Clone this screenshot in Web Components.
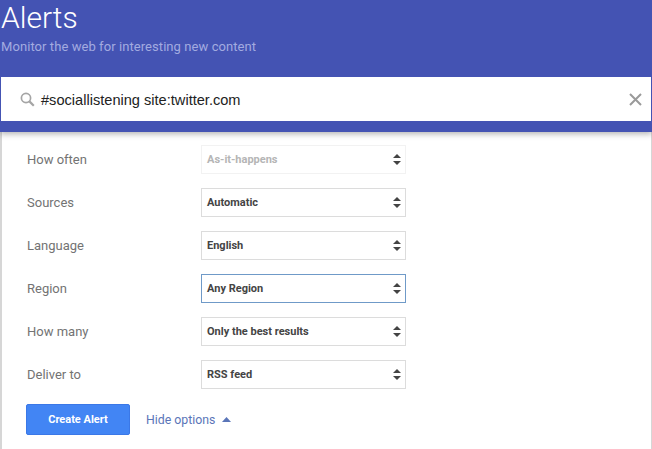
<!doctype html>
<html lang="en">
<head>
<meta charset="utf-8">
<title>Alerts</title>
<style>
  html, body { margin: 0; height: 100%; background: #fff; overflow: hidden; }
  body { font-family: Roboto, "Liberation Sans", sans-serif; }
</style>
</head>
<body>
<alerts-app>
  <alerts-header title="Alerts" subtitle="Monitor the web for interesting new content">
    <alerts-search value="#sociallistening site:twitter.com"></alerts-search>
  </alerts-header>
  <alerts-options>
    <option-row label="How often" value="As-it-happens" disabled></option-row>
    <option-row label="Sources" value="Automatic"></option-row>
    <option-row label="Language" value="English"></option-row>
    <option-row label="Region" value="Any Region" focused></option-row>
    <option-row label="How many" value="Only the best results"></option-row>
    <option-row label="Deliver to" value="RSS feed"></option-row>
    <alerts-actions></alerts-actions>
  </alerts-options>
</alerts-app>

<script>
class AlertsApp extends HTMLElement {
  constructor() {
    super();
    this.attachShadow({ mode: 'open' }).innerHTML = `
      <style>
        :host { display: flex; flex-direction: column; width: 652px; height: 449px; overflow: hidden; }
      </style>
      <slot></slot>`;
  }
}

class AlertsHeader extends HTMLElement {
  connectedCallback() {
    this.attachShadow({ mode: 'open' }).innerHTML = `
      <style>
        :host {
          display: block; height: 132px; box-sizing: border-box;
          background: #4453b3; position: relative; z-index: 1;
          box-shadow: 0 2px 6px rgba(0,0,0,.3);
        }
        h1 { margin: 0; height: 37px; padding-left: 1px; font: 300 30px/35px Roboto, sans-serif; color: #fff; }
        p { margin: 0; height: 40px; padding-left: 1px; font: 400 13px/20px Roboto, sans-serif; letter-spacing: .07px; color: #a3abe0; }
        .bar { padding: 0 1px; }
      </style>
      <h1>${this.getAttribute('title')}</h1>
      <p>${this.getAttribute('subtitle')}</p>
      <div class="bar"><slot></slot></div>`;
  }
}

class AlertsSearch extends HTMLElement {
  connectedCallback() {
    this.attachShadow({ mode: 'open' }).innerHTML = `
      <style>
        :host {
          display: flex; align-items: center; height: 44px; box-sizing: border-box;
          background: #fff; padding: 0 9px 0 19px;
          font: 400 14.6px "Liberation Sans", sans-serif; color: #222;
        }
        span { flex: 1; padding-left: 6px; position: relative; top: 1px; }
        svg { display: block; }
      </style>
      <svg width="15" height="15" viewBox="0 0 15 15" fill="none" stroke="#a5a5a5">
        <circle cx="6" cy="6" r="4.6" stroke-width="1.7"/>
        <path d="M9.4 9.4l4.4 4.4" stroke-width="2.2"/>
      </svg>
      <span>${this.getAttribute('value')}</span>
      <svg width="13" height="13" viewBox="0 0 13 13" fill="none" stroke="#9a9a9a" stroke-width="2">
        <path d="M1 1l11 11M12 1L1 12"/>
      </svg>`;
  }
}

class AlertsOptions extends HTMLElement {
  constructor() {
    super();
    this.attachShadow({ mode: 'open' }).innerHTML = `
      <style>
        :host {
          display: flex; flex-direction: column; flex: 1; gap: 14px; box-sizing: border-box;
          padding: 13px 26px 0 24px;
          border-left: 2px solid #d6d6d6; border-right: 1px solid #d6d6d6;
        }
      </style>
      <slot></slot>`;
  }
}

class OptionRow extends HTMLElement {
  connectedCallback() {
    const disabled = this.hasAttribute('disabled');
    const focused = this.hasAttribute('focused');
    this.attachShadow({ mode: 'open' }).innerHTML = `
      <style>
        :host { display: flex; align-items: center; height: 29px; font-family: Roboto, sans-serif; }
        label { width: 174px; padding-left: 1px; font-size: 13px; color: #737373; }
        .select {
          display: flex; align-items: center; justify-content: space-between;
          width: 205px; height: 29px; box-sizing: border-box; padding: 0 4px 0 5px;
          border: 1px solid ${focused ? '#6f9ac8' : disabled ? '#f2f2f2' : '#dcdcdc'};
          font-size: 11px; font-weight: 700; color: ${disabled ? '#b5b5b5' : '#444'};
        }
        svg { display: block; }
      </style>
      <label>${this.getAttribute('label')}</label>
      <div class="select">
        <span>${this.getAttribute('value')}</span>
        <svg width="8" height="11" viewBox="0 0 8 11" fill="#444"><path d="M4 0l4 4H0zM4 11L0 7h8z"/></svg>
      </div>`;
  }
}

class AlertsActions extends HTMLElement {
  constructor() {
    super();
    this.attachShadow({ mode: 'open' }).innerHTML = `
      <style>
        :host { display: flex; align-items: center; gap: 16px; margin-top: 1px; font-family: Roboto, sans-serif; }
        button {
          width: 104px; height: 31px; padding: 0; border: 1px solid #3b78e7; border-radius: 2px;
          background: #4285f4; color: #fff; font: 700 11px Roboto, sans-serif;
        }
        a { display: flex; align-items: center; gap: 7px; font-size: 12.3px; color: #5a75b8; }
        svg { display: block; }
      </style>
      <button>Create Alert</button>
      <a>Hide options
        <svg width="9" height="5" viewBox="0 0 9 5" fill="#5a75b8"><path d="M4.5 0L9 5H0z"/></svg>
      </a>`;
  }
}

customElements.define('alerts-app', AlertsApp);
customElements.define('alerts-header', AlertsHeader);
customElements.define('alerts-search', AlertsSearch);
customElements.define('alerts-options', AlertsOptions);
customElements.define('option-row', OptionRow);
customElements.define('alerts-actions', AlertsActions);
</script>
</body>
</html>
